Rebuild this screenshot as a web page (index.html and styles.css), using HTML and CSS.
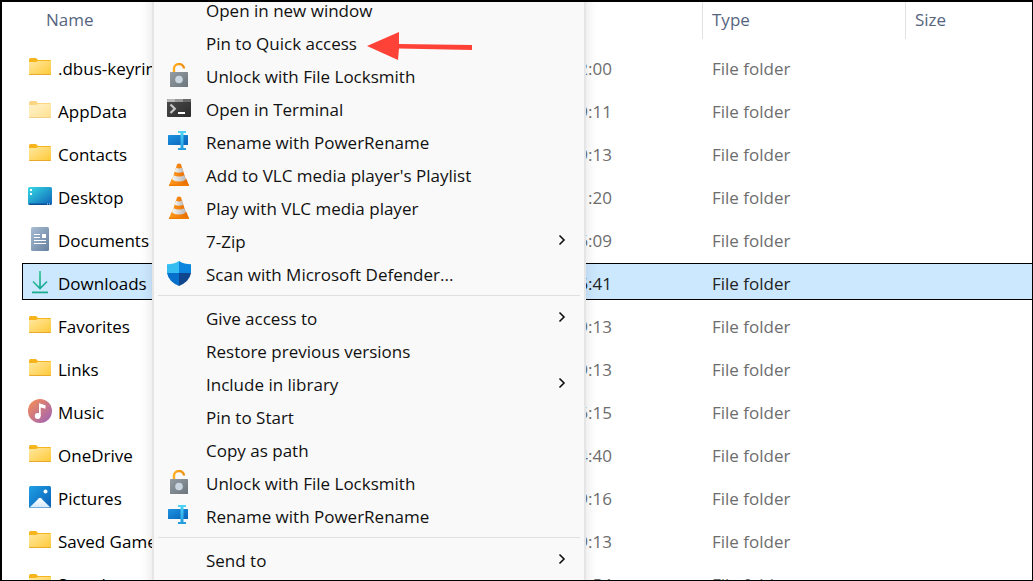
FILE: index.html
```
<!DOCTYPE html>
<html lang="en">
<head>
  <meta charset="UTF-8">
  <meta name="viewport" content="width=device-width, initial-scale=1.0">
  <title>File Explorer</title>
  <link rel="stylesheet" href="styles.css">
</head>
<body>
  <!-- Icon sprite -->
  <svg class="sprite" aria-hidden="true">
    <defs>
      <linearGradient id="gFolder" x1="0" y1="0" x2="1" y2="1">
        <stop offset="0" stop-color="#ffe8a0"/><stop offset="1" stop-color="#ffc937"/>
      </linearGradient>
      <linearGradient id="gDesktop" x1="0" y1="0" x2="1" y2="1">
        <stop offset="0" stop-color="#36dbe4"/><stop offset="1" stop-color="#0f62b8"/>
      </linearGradient>
      <linearGradient id="gDoc" x1="0" y1="0" x2="1" y2="1">
        <stop offset="0" stop-color="#a9bdd3"/><stop offset="1" stop-color="#64809f"/>
      </linearGradient>
      <linearGradient id="gDown" gradientUnits="userSpaceOnUse" x1="4" y1="0" x2="20" y2="24">
        <stop offset="0" stop-color="#3ad08c"/><stop offset="1" stop-color="#0c9a9a"/>
      </linearGradient>
      <linearGradient id="gMusic" x1="0" y1="0" x2="1" y2="1">
        <stop offset="0.1" stop-color="#f08a5c"/><stop offset="0.9" stop-color="#a565b0"/>
      </linearGradient>
      <linearGradient id="gPic" x1="0" y1="0" x2="1" y2="1">
        <stop offset="0" stop-color="#1fa0e6"/><stop offset="1" stop-color="#0a5fb4"/>
      </linearGradient>
      <linearGradient id="gHill" x1="0" y1="0" x2="0" y2="1">
        <stop offset="0" stop-color="#ffffff"/><stop offset="1" stop-color="#d3e9fb"/>
      </linearGradient>
      <linearGradient id="gLock" x1="0" y1="0" x2="1" y2="1">
        <stop offset="0" stop-color="#939ba3"/><stop offset="1" stop-color="#6d757d"/>
      </linearGradient>
      <linearGradient id="gShackle" x1="0" y1="0" x2="1" y2="0">
        <stop offset="0" stop-color="#ffae1f"/><stop offset="1" stop-color="#ef8d0b"/>
      </linearGradient>
      <linearGradient id="gTerm" x1="0" y1="0" x2="1" y2="1">
        <stop offset="0" stop-color="#4c4c4c"/><stop offset="1" stop-color="#2b2b2b"/>
      </linearGradient>
      <linearGradient id="gRename" x1="0" y1="0" x2="1" y2="1">
        <stop offset="0" stop-color="#1c93e0"/><stop offset="1" stop-color="#0a63b8"/>
      </linearGradient>
      <linearGradient id="gCursor" x1="0" y1="0" x2="0" y2="1">
        <stop offset="0" stop-color="#50d4f8"/><stop offset="1" stop-color="#2299dd"/>
      </linearGradient>
      <linearGradient id="gCone" x1="0" y1="0" x2="1" y2="0">
        <stop offset="0" stop-color="#ff9a1f"/><stop offset="1" stop-color="#e56b00"/>
      </linearGradient>
      <linearGradient id="gBand" x1="0" y1="0" x2="1" y2="0">
        <stop offset="0" stop-color="#f6f6f6"/><stop offset="1" stop-color="#b9b9b9"/>
      </linearGradient>
    </defs>

    <symbol id="folder" viewBox="0 0 24 24">
      <path d="M1 5Q1 3 2.500 3H7.500Q8.500 3 9 4L10 5H22Q23 5 23 6V10H1z" fill="#f7b51d"/>
      <path d="M1 7H8L10 6H23V19Q23 20 22 20H2Q1 20 1 19z" fill="url(#gFolder)"/>
      <path d="M1 19Q1 20 2 20H22Q23 20 23 19z" fill="#e8a92c"/>
    </symbol>

    <symbol id="desktop" viewBox="0 0 24 24">
      <rect y="3" width="24" height="18" rx="1.500" fill="url(#gDesktop)"/>
      <path d="M2 5h2v2H2zM2 9h2v2H2z" fill="#fff"/>
      <path d="M1 19.500H23V20Q23 21 22 21H2Q1 21 1 20z" fill="#0b4f94"/>
      <path d="M19 19.500h1v1h-1zM21 19.500h1v1h-1z" fill="#bfe4ff"/>
    </symbol>

    <symbol id="document" viewBox="0 0 24 24">
      <rect x="3" width="18" height="24" rx="1.500" fill="url(#gDoc)"/>
      <path d="M6 7.500h6M6 10.500h6M6 13.500h12M6 16.500h12" stroke="#fff" stroke-width="1.200"/>
      <rect x="14" y="7" width="4" height="4" fill="#fff"/>
    </symbol>

    <symbol id="download" viewBox="0 0 24 24">
      <path d="M12 1V18M5 11.500L12 18.500L19 11.500" fill="none" stroke="url(#gDown)" stroke-width="1.700"/>
      <rect x="4" y="21.500" width="16" height="1.800" fill="#19ad90"/>
    </symbol>

    <symbol id="music" viewBox="0 0 24 24">
      <circle cx="12" cy="12" r="12" fill="url(#gMusic)"/>
      <circle cx="9.700" cy="17" r="2.900" fill="#fff"/>
      <path d="M11 17V4.300L17.500 6.200V9.800L12.700 8.500V17z" fill="#fff"/>
    </symbol>

    <symbol id="picture" viewBox="0 0 24 24">
      <rect x="1" y="1" width="22" height="22" rx="1.500" fill="url(#gPic)"/>
      <path d="M2 22L11 13.200Q12 12.400 13 13.200L22 22Q21.500 22.500 21 22.500H3Q2.500 22.500 2 22z" fill="url(#gHill)"/>
      <circle cx="17.500" cy="6.500" r="2" fill="#fff"/>
    </symbol>

    <symbol id="lock" viewBox="0 0 24 24">
      <path d="M7 10V6.500A5 5 0 0 1 17 5.500" fill="none" stroke="url(#gShackle)" stroke-width="2.400"/>
      <rect x="3" y="9" width="18" height="15" rx="0.500" fill="url(#gLock)"/>
      <circle cx="12" cy="16.500" r="3.800" fill="#c9d5e0"/>
    </symbol>

    <symbol id="terminal" viewBox="0 0 24 24">
      <rect y="3" width="24" height="18" rx="1" fill="url(#gTerm)"/>
      <path d="M0 6V4Q0 3 1 3H8V6z" fill="#b8b8b8"/>
      <path d="M8 3h8v3H8z" fill="#969696"/>
      <path d="M16 3h7Q24 3 24 4V6h-8z" fill="#686868"/>
      <path d="M3.500 8.500L7.800 12.800L3.500 17" fill="none" stroke="#c8c8c8" stroke-width="2.200"/>
      <path d="M11 17h7" stroke="#fff" stroke-width="2"/>
    </symbol>

    <symbol id="rename" viewBox="0 0 24 24">
      <rect x="1" y="6" width="20" height="10" rx="0.500" fill="url(#gRename)"/>
      <path d="M11 2h8v2h-2.500V19h2.500v2h-8v-2h2.500V4H11z" fill="url(#gCursor)"/>
    </symbol>

    <symbol id="cone" viewBox="0 0 24 24">
      <path d="M4.500 17H19.500L22 23.500H2z" fill="url(#gCone)"/>
      <path d="M2 22.500h20v1.500H2z" fill="#f07c00"/>
      <path d="M10 2.500Q10.500 1.500 12 1.500T14 2.500L19 18Q17 20.500 12 20.500T5 18z" fill="url(#gCone)"/>
      <path d="M9 5.700Q12 7.200 15 5.700L16.300 9.800Q12 11.800 7.700 9.800z" fill="url(#gBand)"/>
      <path d="M6.600 13.200Q12 16 17.400 13.200L18.800 17.700Q12 21.500 5.200 17.700z" fill="url(#gBand)"/>
    </symbol>

    <symbol id="shield" viewBox="0 0 24 26">
      <path d="M12 1Q7 4.200 0 4.200V13H12z" fill="#34bdf0"/>
      <path d="M12 1Q17 4.200 24 4.200V13H12z" fill="#0a84dc"/>
      <path d="M0 13H12V26Q1.500 21.500 0 13z" fill="#0770cd"/>
      <path d="M24 13H12V26Q22.500 21.500 24 13z" fill="#10468e"/>
    </symbol>

    <symbol id="chevron" viewBox="0 0 8 12">
      <path d="M1.500 1.500L6 6L1.500 10.500" fill="none" stroke="currentColor" stroke-width="1.600"/>
    </symbol>
  </svg>

  <main class="explorer">
    <table class="files">
      <colgroup>
        <col class="col-name">
        <col class="col-date">
        <col class="col-type">
        <col>
      </colgroup>
      <thead>
        <tr>
          <th><span class="head name-head">Name</span></th>
          <th></th>
          <th><span class="head divided">Type</span></th>
          <th><span class="head divided">Size</span></th>
        </tr>
      </thead>
      <tbody>
        <tr><td><div class="file"><svg class="icon"><use href="#folder"/></svg><span>.dbus-keyrings</span></div></td><td class="date">12:00</td><td>File folder</td><td></td></tr>
        <tr><td><div class="file"><svg class="icon faded"><use href="#folder"/></svg><span>AppData</span></div></td><td class="date">19:11</td><td>File folder</td><td></td></tr>
        <tr><td><div class="file"><svg class="icon"><use href="#folder"/></svg><span>Contacts</span></div></td><td class="date">19:13</td><td>File folder</td><td></td></tr>
        <tr><td><div class="file"><svg class="icon"><use href="#desktop"/></svg><span>Desktop</span></div></td><td class="date">11:20</td><td>File folder</td><td></td></tr>
        <tr><td><div class="file"><svg class="icon"><use href="#document"/></svg><span>Documents</span></div></td><td class="date">16:09</td><td>File folder</td><td></td></tr>
        <tr class="selected"><td><div class="file"><svg class="icon"><use href="#download"/></svg><span>Downloads</span></div></td><td class="date">16:41</td><td>File folder</td><td></td></tr>
        <tr><td><div class="file"><svg class="icon"><use href="#folder"/></svg><span>Favorites</span></div></td><td class="date">19:13</td><td>File folder</td><td></td></tr>
        <tr><td><div class="file"><svg class="icon"><use href="#folder"/></svg><span>Links</span></div></td><td class="date">19:13</td><td>File folder</td><td></td></tr>
        <tr><td><div class="file"><svg class="icon"><use href="#music"/></svg><span>Music</span></div></td><td class="date">16:15</td><td>File folder</td><td></td></tr>
        <tr><td><div class="file"><svg class="icon"><use href="#folder"/></svg><span>OneDrive</span></div></td><td class="date">14:40</td><td>File folder</td><td></td></tr>
        <tr><td><div class="file"><svg class="icon"><use href="#picture"/></svg><span>Pictures</span></div></td><td class="date">19:16</td><td>File folder</td><td></td></tr>
        <tr><td><div class="file"><svg class="icon"><use href="#folder"/></svg><span>Saved Games</span></div></td><td class="date">19:13</td><td>File folder</td><td></td></tr>
        <tr><td><div class="file"><svg class="icon"><use href="#folder"/></svg><span>Searches</span></div></td><td class="date">11:54</td><td>File folder</td><td></td></tr>
      </tbody>
    </table>

    <!-- Context menu -->
    <div class="menu">
      <button class="item"><span class="slot"></span><span class="label">Open in new window</span></button>
      <button class="item"><span class="slot"></span><span class="label">Pin to Quick access</span></button>
      <button class="item"><svg class="icon slot"><use href="#lock"/></svg><span class="label">Unlock with File Locksmith</span></button>
      <button class="item"><svg class="icon slot"><use href="#terminal"/></svg><span class="label">Open in Terminal</span></button>
      <button class="item"><svg class="icon slot"><use href="#rename"/></svg><span class="label">Rename with PowerRename</span></button>
      <button class="item"><svg class="icon slot"><use href="#cone"/></svg><span class="label">Add to VLC media player's Playlist</span></button>
      <button class="item"><svg class="icon slot"><use href="#cone"/></svg><span class="label">Play with VLC media player</span></button>
      <button class="item"><span class="slot"></span><span class="label">7-Zip</span><svg class="chevron"><use href="#chevron"/></svg></button>
      <button class="item"><svg class="icon slot shield"><use href="#shield"/></svg><span class="label">Scan with Microsoft Defender...</span></button>
      <hr>
      <button class="item"><span class="slot"></span><span class="label">Give access to</span><svg class="chevron"><use href="#chevron"/></svg></button>
      <button class="item"><span class="slot"></span><span class="label">Restore previous versions</span></button>
      <button class="item"><span class="slot"></span><span class="label">Include in library</span><svg class="chevron"><use href="#chevron"/></svg></button>
      <button class="item"><span class="slot"></span><span class="label">Pin to Start</span></button>
      <button class="item"><span class="slot"></span><span class="label">Copy as path</span></button>
      <button class="item"><svg class="icon slot"><use href="#lock"/></svg><span class="label">Unlock with File Locksmith</span></button>
      <button class="item"><svg class="icon slot"><use href="#rename"/></svg><span class="label">Rename with PowerRename</span></button>
      <hr>
      <button class="item"><span class="slot"></span><span class="label">Send to</span><svg class="chevron"><use href="#chevron"/></svg></button>
    </div>

    <svg class="pointer" viewBox="0 0 106 30">
      <path d="M0 14L32 0V12L105 13V18L32 16.500L31 28z" fill="#ff4238"/>
    </svg>
  </main>
</body>
</html>
```
FILE: styles.css
```
* {
  box-sizing: border-box;
  margin: 0;
  padding: 0;
}

body {
  background: #fff;
  color: #111;
  font-family: 'Open Sans', 'Noto Sans', sans-serif;
  font-size: 17px;
  line-height: 24px;
}

.sprite {
  position: absolute;
  width: 0;
  height: 0;
}

.explorer {
  position: relative;
  height: 100vh;
  overflow: hidden;
  border: solid #000;
  border-width: 2px 1px 1px 2px;
  padding-left: 20px;
}

.icon {
  flex: none;
  width: 24px;
  height: 24px;
}

/* File list */
.files {
  width: 100%;
  margin-top: -6px;
  table-layout: fixed;
  border-collapse: separate;
  border-spacing: 0 6px;
}

.col-name {
  width: 300px;
}

.col-date {
  width: 380px;
}

.col-type {
  width: 203px;
}

.files th {
  height: 40px;
  vertical-align: top;
  text-align: left;
  font-weight: 400;
  color: #56657f;
}

.head {
  display: block;
  height: 37px;
  padding: 6px 9px;
}

.name-head {
  padding-left: 24px;
}

.divided {
  border-left: 1px solid #e2e2e2;
}

.files td {
  height: 37px;
  padding: 5px 10px 0;
  border: solid transparent;
  border-width: 1px 0;
  color: #6d6d6d;
}

.files td:first-child {
  padding: 0 5px;
  border-left-width: 1px;
}

.files td.date {
  padding-right: 90px;
  text-align: right;
}

.file {
  display: flex;
  align-items: center;
  gap: 6px;
  color: #000;
}

.file span {
  padding-top: 4px;
}

.faded {
  opacity: 0.55;
}

.files .selected td {
  background: #cce8ff;
  border-color: #000;
  color: #222;
}

/* Context menu */
.menu {
  position: absolute;
  top: -15px;
  bottom: -15px;
  left: 150px;
  width: 434px;
  padding: 4px;
  background: #f9f9f9;
  border: 2px solid #e5e5e5;
  box-shadow: 0 0 12px rgba(0, 0, 0, 0.12);
}

.item {
  display: flex;
  align-items: center;
  width: 100%;
  height: 33px;
  padding: 0 14px 2px 9px;
  background: none;
  border: none;
  color: #111;
  font: inherit;
  text-align: left;
}

.item:hover {
  background: #efefef;
}

.slot {
  width: 24px;
  margin-right: 15px;
}

.shield {
  height: 26px;
}

.label {
  flex: 1;
  padding-top: 4px;
}

.chevron {
  width: 8px;
  height: 12px;
}

.menu hr {
  margin: 5px 0;
  border: none;
  border-top: 1px solid #e0e0e0;
}

/* Arrow drawn over the menu */
.pointer {
  position: absolute;
  top: 30px;
  left: 365px;
  width: 106px;
  height: 30px;
}
```
